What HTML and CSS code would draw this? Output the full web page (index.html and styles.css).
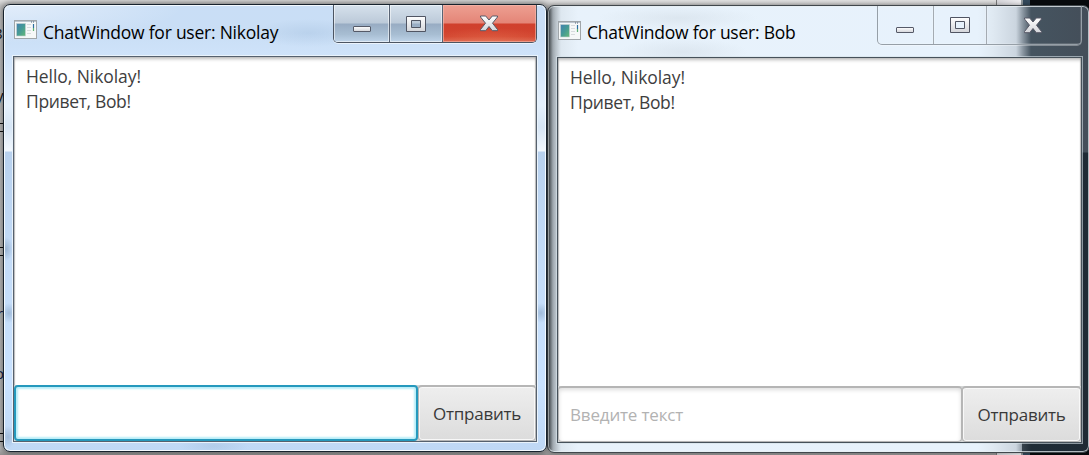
FILE: index.html
```html
<!DOCTYPE html>
<html lang="ru">
<head>
<meta charset="utf-8">
<title>ChatWindow</title>
<link rel="stylesheet" href="styles.css">
</head>
<body>
<svg class="defs" width="0" height="0" aria-hidden="true">
  <defs>
    <linearGradient id="metal" x1="0" y1="0" x2="0" y2="1"><stop offset="0" stop-color="#fff"/><stop offset="1" stop-color="#d3d5da"/></linearGradient>
    <linearGradient id="photo" x1="0" y1="0" x2="1" y2="1"><stop offset="0" stop-color="#4381b2"/><stop offset=".5" stop-color="#459a95"/><stop offset="1" stop-color="#65b977"/></linearGradient>
    <symbol id="app" viewBox="0 0 23 20">
      <rect x=".5" y=".5" width="22" height="18" fill="#f6f8f8" stroke="#a0a6aa"/>
      <path d="M1 1.500h21" stroke="#bcc5ce"/><path d="M17 2h1m1 0h1" stroke="#52677a"/>
      <rect x="2.500" y="3.500" width="9" height="12.500" fill="url(#photo)" stroke="#c8d2d4" stroke-width=".6"/>
      <path d="M13 4.500h4m-4 3h4m-4 3h4m-4 3h4" stroke="#d8dcde"/>
      <path d="M19.500 4v4" stroke="#2c6fa0" stroke-width="1.200"/><path d="M19.500 8v3" stroke="#5eb173" stroke-width="1.200"/>
    </symbol>
    <symbol id="min" viewBox="0 0 20 8"><rect x="1.500" y="1.500" width="17" height="5" rx=".5" fill="url(#metal)" stroke="#555a68"/></symbol>
    <symbol id="max" viewBox="0 0 20 16"><path d="M.5.5h19v15H.5zM5.500 4.500v7h9v-7z" fill="url(#metal)" fill-rule="evenodd" stroke="#505563" stroke-linejoin="round"/></symbol>
    <symbol id="close" viewBox="0 0 20 17"><path d="M1.500 1h5.200L10 5l3.300-4h5.200v1l-5 6.200 5 6.300v1.200h-5.200L10 11.500l-3.300 4.200H1.500v-1.200l5-6.300-5-6.200z" fill="url(#metal)" stroke="#575866" stroke-linejoin="round"/></symbol>
  </defs>
</svg>
<main class="desktop">
  <div class="backdrop">
    <span class="fragment f1">8</span><span class="fragment f2">y</span><span class="fragment f3">r</span><span class="fragment f4">o</span>
    <i class="rule r1"></i><i class="rule r2"></i><i class="rule r3"></i>
    <i class="scrollbar"></i><i class="dark-panel"></i>
  </div>

  <section class="window inactive">
    <header class="titlebar">
      <svg class="app-icon"><use href="#app"/></svg>
      <h1 class="title">ChatWindow for user: Bob</h1>
      <div class="controls">
        <button class="control minimize" aria-label="Minimize"><svg class="min"><use href="#min"/></svg></button>
        <button class="control maximize" aria-label="Maximize"><svg class="max"><use href="#max"/></svg></button>
        <button class="control close" aria-label="Close"><svg class="x"><use href="#close"/></svg></button>
      </div>
    </header>
    <div class="client">
      <div class="messages"><p class="hello">Hello, Nikolay!</p><p class="privet">Привет, Bob!</p></div>
      <div class="composer"><div class="field"><span class="placeholder">Введите текст</span></div><button class="send"><span>Отправить</span></button></div>
    </div>
  </section>

  <section class="window active">
    <header class="titlebar">
      <svg class="app-icon"><use href="#app"/></svg>
      <h1 class="title">ChatWindow for user: Nikolay</h1>
      <div class="controls">
        <button class="control minimize" aria-label="Minimize"><svg class="min"><use href="#min"/></svg></button>
        <button class="control maximize" aria-label="Maximize"><svg class="max"><use href="#max"/></svg></button>
        <button class="control close" aria-label="Close"><svg class="x"><use href="#close"/></svg></button>
      </div>
    </header>
    <div class="client">
      <div class="messages"><p class="hello">Hello, Nikolay!</p><p class="privet">Привет, Bob!</p></div>
      <div class="composer"><div class="field focused"></div><button class="send"><span>Отправить</span></button></div>
    </div>
  </section>
</main>
</body>
</html>
```
FILE: styles.css
```css
* { box-sizing: border-box; }
body { margin: 0; overflow: hidden; font-family: "Open Sans", "Noto Sans", sans-serif; }
h1, p { margin: 0; font-weight: 400; white-space: nowrap; }
button { font: inherit; padding: 0; }
svg { display: block; flex: none; }
.defs { position: absolute; }
.desktop { position: relative; width: 1089px; height: 455px; overflow: hidden; background: #aaa; }
.backdrop { position: absolute; inset: 0; background: linear-gradient(#dedede, #c5c5c5 6px, #bbb 448px, #929292); }
.scrollbar { position: absolute; left: 996px; width: 27px; top: 0; bottom: 0; background: linear-gradient(90deg, #d4d4d8, #eeedf0); border-left: 1px solid #777; border-right: 2px solid #8d9599; }
.dark-panel { position: absolute; left: 1023px; right: 0; top: 0; bottom: 0; background: #080b0e; border-left: 7px solid #34495b; }
.fragment { position: absolute; left: -6px; font-size: 15px; line-height: 18px; color: #111; }
.f1 { top: 24px; }
.f2 { top: 86px; left: -4px; }
.f3 { top: 304px; left: -3px; color: #111b48; }
.f4 { top: 364px; left: -5px; color: #111b48; }
.rule { position: absolute; left: 0; width: 4px; height: 9px; border: solid #111; border-width: 1px 0; }
.r1 { top: 123px; }
.r2 { top: 247px; }
.r3 { top: 433px; }

.window { position: absolute; display: flex; flex-direction: column; padding: 0 9px 9px; border: 1px solid #17222d; border-radius: 7px; height: 448px; }
.active {
  left: 3px; top: 4px; width: 544px;
  box-shadow: inset 0 0 0 1px #f4faff, 0 0 6px 1px #0007;
  background:
    radial-gradient(ellipse 8px 10px at 5px 308px, #8da9c9aa, transparent),
    radial-gradient(ellipse 8px 10px at 537px 308px, #8da9c9aa, transparent),
    radial-gradient(ellipse 7px 12px at 2px 244px, #829dbd99, transparent),
    radial-gradient(ellipse 8px 11px at 4px 432px, #8da9c999, transparent),
    radial-gradient(ellipse 55px 14px at 305px 28px, #9cb9da55, transparent),
    radial-gradient(ellipse 35px 9px at 210px 441px, #a3bfdc77, transparent),
    radial-gradient(ellipse 180px 38px at 0 0, #f2f7fd99, transparent),
    linear-gradient(#c9def6 0, #c9def5 27px, #cfe3fa 51px, #e4f0fc 100px, #d6e5f5 122px, #f2f8fe 146px, #b8d1ee 147px, #c4dcf8 260px, #c9e2ff 380px, #bfd8f5);
}
.inactive {
  left: 547px; top: 5px; width: 543px;
  border-color: #40474c;
  box-shadow: inset 0 0 0 1px #e7edf2bb, 0 0 4px #0006;
  background:
    linear-gradient(90deg, #42494e 0, #8b9399bb 5px, #c1cbd144 13px, transparent 30px),
    radial-gradient(ellipse 80px 12px at 130px 12px, #bdc7d044, transparent),
    radial-gradient(ellipse 65px 14px at 135px 46px, #bdc7d044, transparent),
    linear-gradient(transparent 146px, #0e1a24b0 147px) right / 67px 100% no-repeat,
    linear-gradient(90deg, #e8f2fb 0, #e7f2fc 430px, #dfe9f2 445px, #cbd5df 468px, #8995a0 475px, #455460 483px, #444e59 100%);
}
.titlebar { display: flex; height: 51px; flex: none; }
.inactive .titlebar { margin-right: -1px; }
.app-icon { width: 23px; height: 20px; margin-top: 15px; margin-left: 1px; }
.title { width: 240px; margin: 14px 0 0 6px; font-size: 17.5px; line-height: 25px; letter-spacing: -.24px; color: #000; }
.active .title { margin-top: 15px; }
.controls { display: flex; width: 204px; height: 39px; margin-left: auto; border: 1px solid #4c5562; border-top: 0; border-radius: 0 0 5px 5px; overflow: hidden; box-shadow: 0 1px 0 #ffffff99; }
.active .controls { height: 38px; }
.control { display: flex; justify-content: center; align-items: center; border: 0; border-right: 1px solid #596475; background: linear-gradient(#d6e1ec, #bccad9 48%, #98acc3 52%, #a8bed3 80%, #bfd4e9); box-shadow: inset 0 0 0 1px #ffffff88; }
.minimize { width: 56px; padding-top: 10px; }
.maximize { width: 53px; }
.close { flex: 1; border-right: 0; padding-right: 2px; }
.active .close { background: radial-gradient(ellipse 65px 14px at 50% 100%, #e9785688, transparent), linear-gradient(#ed9f92, #e48577 49%, #d0402d 51%, #d2442f 85%, #db6651); box-shadow: inset 0 0 0 1px #f5bdaf99; }
.inactive .controls { width: 205px; position: relative; left: 1px; border-color: #969fa7; box-shadow: 0 1px 0 #ffffff55; }
.inactive .control { background: transparent; border-color: #a4abb2; box-shadow: inset 0 0 0 1px #ffffff25; }
.inactive .minimize { padding-right: 2px; }
.min { width: 20px; height: 8px; }
.max { width: 20px; height: 16px; }
.x { width: 20px; height: 17px; }

.client { display: flex; flex: 1; flex-direction: column; width: 524px; border: 1px solid #56616e; background: #fff; box-shadow: 0 0 0 1px #e9f3fc; }
.inactive .client { width: 525px; border-color: #46515a; box-shadow: 0 0 0 1px #d6e1e799; }
.messages { flex: 1; padding: 7px 0 0 12px; color: #3e3e3e; font-size: 17.5px; line-height: 25px; box-shadow: inset 0 4px 4px -3px #999, inset 2px 0 1px -1px #bbb, inset -2px 0 1px -1px #bbb; }
.hello { letter-spacing: -.07px; }
.privet { letter-spacing: -.35px; }
.composer { display: flex; height: 56px; flex: none; background: #d3d5d5; }
.field { display: flex; align-items: center; width: 404px; padding: 0 0 0 11px; background: #fff; border: 1px solid #b5b5b5; border-top-width: 2px; border-radius: 4px; box-shadow: inset 0 2px 4px #ddd; }
.focused { border: 2px solid #2599bd; box-shadow: inset 0 0 2px 2px #b9eef8; }
.placeholder { color: #b2b2b2; font-size: 17px; line-height: 24px; letter-spacing: -.17px; }
.send { flex: 1; margin: 0; color: #393939; font-size: 17px; letter-spacing: -.25px; border: 1px solid #b6b6b6; border-top-width: 2px; border-radius: 4px; background: linear-gradient(#eee, #dcdcdc); box-shadow: inset 0 0 0 1px #f8f8f8; }
.send span { display: block; margin-top: -1px; }
```
